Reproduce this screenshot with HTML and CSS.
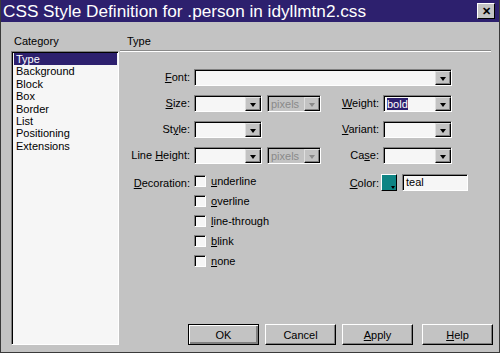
FILE: index.html
```html
<!DOCTYPE html>
<html lang="en">
<head>
  <meta charset="UTF-8" />
  <title>CSS Style Definition</title>
  <link rel="stylesheet" href="styles.css">
</head>
<body>
  <div class="window">
    <div class="titlebar">
      <span class="title">CSS Style Definition for .person in idyllmtn2.css</span>
      <span class="close">&#x2715;</span>
    </div>

    <div class="content">
      <div class="category">
        <div class="caption">Category</div>
        <ul class="listbox">
          <li class="selected">Type</li>
          <li>Background</li>
          <li>Block</li>
          <li>Box</li>
          <li>Border</li>
          <li>List</li>
          <li>Positioning</li>
          <li>Extensions</li>
        </ul>
      </div>

      <div class="panel">
        <div class="caption panel-title">Type</div>
        <div class="separator"></div>

        <div class="form">
          <label class="lbl"><u>F</u>ont:</label>
          <div class="select wide"><span class="value"></span><span class="drop"></span></div>

          <label class="lbl"><u>S</u>ize:</label>
          <div class="select"><span class="value"></span><span class="drop"></span></div>
          <div class="select disabled"><span class="value">pixels</span><span class="drop"></span></div>
          <label class="lbl"><u>W</u>eight:</label>
          <div class="select"><span class="value"><span class="hilite">bold</span></span><span class="drop"></span></div>

          <label class="lbl">St<u>y</u>le:</label>
          <div class="select"><span class="value"></span><span class="drop"></span></div>
          <div></div>
          <label class="lbl"><u>V</u>ariant:</label>
          <div class="select"><span class="value"></span><span class="drop"></span></div>

          <label class="lbl">Line <u>H</u>eight:</label>
          <div class="select"><span class="value"></span><span class="drop"></span></div>
          <div class="select disabled"><span class="value">pixels</span><span class="drop"></span></div>
          <label class="lbl">Ca<u>s</u>e:</label>
          <div class="select"><span class="value"></span><span class="drop"></span></div>

          <label class="lbl deco-lbl"><u>D</u>ecoration:</label>
          <div class="checks">
            <div class="check"><span class="box"></span><span><u>u</u>nderline</span></div>
            <div class="check"><span class="box"></span><span><u>o</u>verline</span></div>
            <div class="check"><span class="box"></span><span><u>l</u>ine-through</span></div>
            <div class="check"><span class="box"></span><span><u>b</u>link</span></div>
            <div class="check"><span class="box"></span><span><u>n</u>one</span></div>
          </div>
          <label class="lbl color-lbl"><u>C</u>olor:</label>
          <div class="color">
            <span class="swatch"><span class="swatch-arrow"></span></span>
            <span class="textbox">teal</span>
          </div>
        </div>

        <div class="buttons">
          <button class="btn default">OK</button>
          <button class="btn">Cancel</button>
          <button class="btn"><u>A</u>pply</button>
          <button class="btn help"><u>H</u>elp</button>
        </div>
      </div>
    </div>
  </div>
</body>
</html>
```

FILE: styles.css
```css
* { box-sizing: border-box; margin: 0; padding: 0; }
html, body {
  width: 500px;
  height: 353px;
  overflow: hidden;
  font-family: "Liberation Sans", Arial, sans-serif;
  font-size: 11px;
  color: #000;
}

.window {
  width: 500px;
  height: 353px;
  background: #c3c3c3;
  border: 1px solid #3a3a3a;
  border-top: none;
  display: flex;
  flex-direction: column;
}

.titlebar {
  height: 22px;
  background: #2d206e;
  display: flex;
  align-items: center;
  justify-content: space-between;
  padding: 0 4px 0 2px;
  flex-shrink: 0;
}

.title {
  color: #fff;
  font-size: 17.2px;
  line-height: 22px;
}

.close {
  width: 18px;
  height: 16px;
  background: #c3c3c3;
  border-top: 1px solid #fff;
  border-left: 1px solid #fff;
  border-right: 1px solid #000;
  border-bottom: 1px solid #000;
  font-size: 11px;
  font-weight: bold;
  line-height: 14px;
  text-align: center;
}

.content {
  flex: 1;
  display: flex;
  padding: 13px 6px 7px 10px;
}

.caption {
  height: 13px;
  line-height: 13px;
  margin-bottom: 3px;
  padding-left: 3px;
}

.category {
  width: 108px;
  display: flex;
  flex-direction: column;
}

.listbox {
  flex: 1;
  list-style: none;
  background: #f6f6f6;
  border-top: 1px solid #808080;
  border-left: 1px solid #808080;
  border-right: 1px solid #fff;
  border-bottom: 1px solid #fff;
  box-shadow: inset 1px 1px 0 #000;
  padding: 1px 1px 0 2px;
}

.listbox li {
  height: 12.4px;
  line-height: 12.4px;
  padding-left: 2px;
}

.listbox li.selected {
  background: #2d206e;
  color: #fff;
}

.panel {
  flex: 1;
  margin-left: 1px;
  display: flex;
  flex-direction: column;
}

.panel-title {
  padding-left: 7px;
  margin-bottom: 2px;
}

.separator {
  height: 2px;
  border-top: 1px solid #8a8a8a;
  border-bottom: 1px solid #fff;
  margin-right: 2px;
}

.form {
  margin-top: 17px;
  display: grid;
  grid-template-columns: 70px 68px 55px 54px 69px;
  grid-auto-rows: 17px;
  column-gap: 4px;
  row-gap: 9px;
}

.lbl {
  text-align: right;
  line-height: 17px;
  white-space: nowrap;
}

.select {
  display: flex;
  background: #f6f6f6;
  border-top: 1px solid #808080;
  border-left: 1px solid #808080;
  border-right: 1px solid #fff;
  border-bottom: 1px solid #fff;
  box-shadow: inset 1px 1px 0 #000;
  padding: 1px 0 0 1px;
}

.select.wide { grid-column: 2 / 6; }

.select .value {
  flex: 1;
  line-height: 14px;
  padding-left: 2px;
}

.hilite {
  background: #2d206e;
  color: #fff;
}

.drop {
  width: 16px;
  height: 14px;
  background: #c3c3c3;
  border-top: 1px solid #dfdfdf;
  border-left: 1px solid #dfdfdf;
  border-right: 1px solid #000;
  border-bottom: 1px solid #000;
  box-shadow: inset -1px -1px 0 #808080;
  position: relative;
}

.drop::after {
  content: "";
  position: absolute;
  left: 4px;
  top: 5px;
  border-left: 3.5px solid transparent;
  border-right: 3.5px solid transparent;
  border-top: 4px solid #000;
}

.select.disabled {
  background: #c3c3c3;
  color: #8a8a8a;
  margin-left: 1px;
}

.select.disabled .drop::after { border-top-color: #8a8a8a; }

.deco-lbl,
.color-lbl {
  margin-top: 2px;
}

.deco-lbl { grid-row: 5; grid-column: 1; }

.checks {
  grid-row: 5;
  grid-column: 2 / 4;
  margin-top: 2px;
  display: flex;
  flex-direction: column;
  gap: 8px;
}

.check {
  display: flex;
  align-items: center;
  height: 12px;
  gap: 5px;
  line-height: 12px;
}

.box {
  width: 12px;
  height: 12px;
  background: #f6f6f6;
  border-top: 1px solid #808080;
  border-left: 1px solid #808080;
  border-right: 1px solid #fff;
  border-bottom: 1px solid #fff;
  box-shadow: inset 1px 1px 0 #000;
}

.color-lbl { grid-row: 5; grid-column: 4; }

.color {
  grid-row: 5;
  grid-column: 5;
  display: flex;
  gap: 5px;
  height: 17px;
  margin-top: 1px;
  margin-left: -2px;
}

.swatch {
  width: 16px;
  height: 17px;
  background: #0e8484;
  border-top: 1px solid #fff;
  border-left: 1px solid #fff;
  border-right: 1px solid #000;
  border-bottom: 1px solid #000;
  position: relative;
  flex-shrink: 0;
}

.swatch-arrow {
  position: absolute;
  right: 1px;
  bottom: 1px;
  border-left: 2.5px solid transparent;
  border-right: 2.5px solid transparent;
  border-top: 3px solid #000;
}

.textbox {
  width: 66px;
  flex-shrink: 0;
  background: #f6f6f6;
  border-top: 1px solid #808080;
  border-left: 1px solid #808080;
  border-right: 1px solid #fff;
  border-bottom: 1px solid #fff;
  box-shadow: inset 1px 1px 0 #000;
  padding-left: 3px;
  line-height: 15px;
}

.buttons {
  margin-top: auto;
  display: flex;
  justify-content: flex-end;
  gap: 6px;
}

.btn {
  width: 71px;
  height: 21px;
  font-family: "Liberation Sans", Arial, sans-serif;
  font-size: 11px;
  background: #c3c3c3;
  border-top: 1px solid #fff;
  border-left: 1px solid #fff;
  border-right: 1px solid #000;
  border-bottom: 1px solid #000;
  box-shadow: inset -1px -1px 0 #808080;
}

.btn.default {
  border: 1px solid #000;
  box-shadow: inset 1px 1px 0 #fff, inset -2px -2px 0 #808080;
}

.btn.help { margin-left: 3px; }
```
